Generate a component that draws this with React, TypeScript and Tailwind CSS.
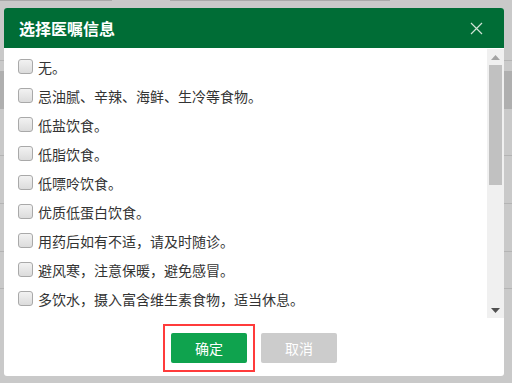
import { useState } from 'react';

const items = [
  '无。',
  '忌油腻、辛辣、海鲜、生冷等食物。',
  '低盐饮食。',
  '低脂饮食。',
  '低嘌呤饮食。',
  '优质低蛋白饮食。',
  '用药后如有不适，请及时随诊。',
  '避风寒，注意保暖，避免感冒。',
  '多饮水，摄入富含维生素食物，适当休息。',
];

function Backdrop() {
  return (
    <div className="absolute inset-0 bg-[#c9c9c9]">
      <div className="flex h-[1px]">
        <div className="w-[112px] bg-[#a9a9a9]" />
        <div className="w-[58px]" />
        <div className="w-[220px] bg-[#a9a9a9]" />
      </div>
      <div className="h-[60px] border-b border-[#b4b4b4]" />
      <div className="h-[10px]" />
      <div className="h-[38px] bg-[#afafaf]" />
      <div className="h-[47px] border-b border-[#b4b4b4]" />
      <div className="h-[48px] border-b border-[#b4b4b4]" />
      <div className="h-[48px] border-b border-[#b4b4b4]" />
      <div className="h-[37px] border-b border-[#b4b4b4]" />
    </div>
  );
}

export default function App() {
  const [checked, setChecked] = useState<boolean[]>(items.map(() => false));

  const toggle = (i: number) => {
    setChecked((prev) => prev.map((v, idx) => (idx === i ? !v : v)));
  };

  return (
    <div
      className="relative w-[512px] h-[383px] overflow-hidden"
      style={{ fontFamily: '"Noto Sans CJK SC", "Noto Sans", sans-serif' }}
    >
      <Backdrop />

      <div className="absolute left-[4px] top-[8px] w-[500px] h-[368px] bg-white rounded-[3px] overflow-hidden flex flex-col">
        <div className="h-[40px] bg-[#006d36] flex items-center justify-between pl-[15px] pr-[21px] shrink-0">
          <h1 className="text-white text-[16px] font-bold leading-none">选择医嘱信息</h1>
          <svg width="13" height="13" viewBox="0 0 13 13" className="text-[#cfe3d6]">
            <path d="M1 1 L12 12 M12 1 L1 12" stroke="currentColor" strokeWidth="1.2" />
          </svg>
        </div>

        <div className="flex h-[270px] pt-[1px] shrink-0">
          <div className="flex-1 overflow-hidden pt-[3px] pl-[14px]">
            {items.map((text, i) => (
              <label key={i} className="flex items-center h-[29px] gap-[5px] cursor-pointer">
                <span
                  onClick={() => toggle(i)}
                  className={`w-[15px] h-[15px] rounded-[3px] border border-[#a9a9a9] shrink-0 ${
                    checked[i] ? 'bg-[#0fa34e]' : 'bg-gradient-to-b from-[#f2f2f2] to-[#dcdcdc]'
                  }`}
                />
                <span className="text-[14px] text-[#333333] leading-none whitespace-nowrap">{text}</span>
              </label>
            ))}
          </div>
          <div className="w-[17px] bg-[#f0f0f0] flex flex-col items-center shrink-0">
            <div className="h-[16px] flex items-center justify-center">
              <svg width="9" height="5" viewBox="0 0 9 5">
                <path d="M0 5 L4.5 0 L9 5 Z" fill="#a3a3a3" />
              </svg>
            </div>
            <div className="w-[13px] h-[120px] bg-[#c1c1c1]" />
            <div className="flex-1" />
            <div className="h-[16px] flex items-center justify-center">
              <svg width="9" height="5" viewBox="0 0 9 5">
                <path d="M0 0 L9 0 L4.5 5 Z" fill="#505050" />
              </svg>
            </div>
          </div>
        </div>

        <div className="flex pl-[159px] pt-[6px]">
          <div className="border-2 border-[#ff3b3b] px-[6px] py-[7px]">
            <button className="w-[76px] h-[30px] bg-[#0fa34e] rounded-[2px] text-white text-[14px]">确定</button>
          </div>
          <button className="ml-[6px] mt-[9px] w-[76px] h-[30px] bg-[#cccccc] rounded-[2px] text-white text-[14px]">
            取消
          </button>
        </div>
      </div>
    </div>
  );
}
